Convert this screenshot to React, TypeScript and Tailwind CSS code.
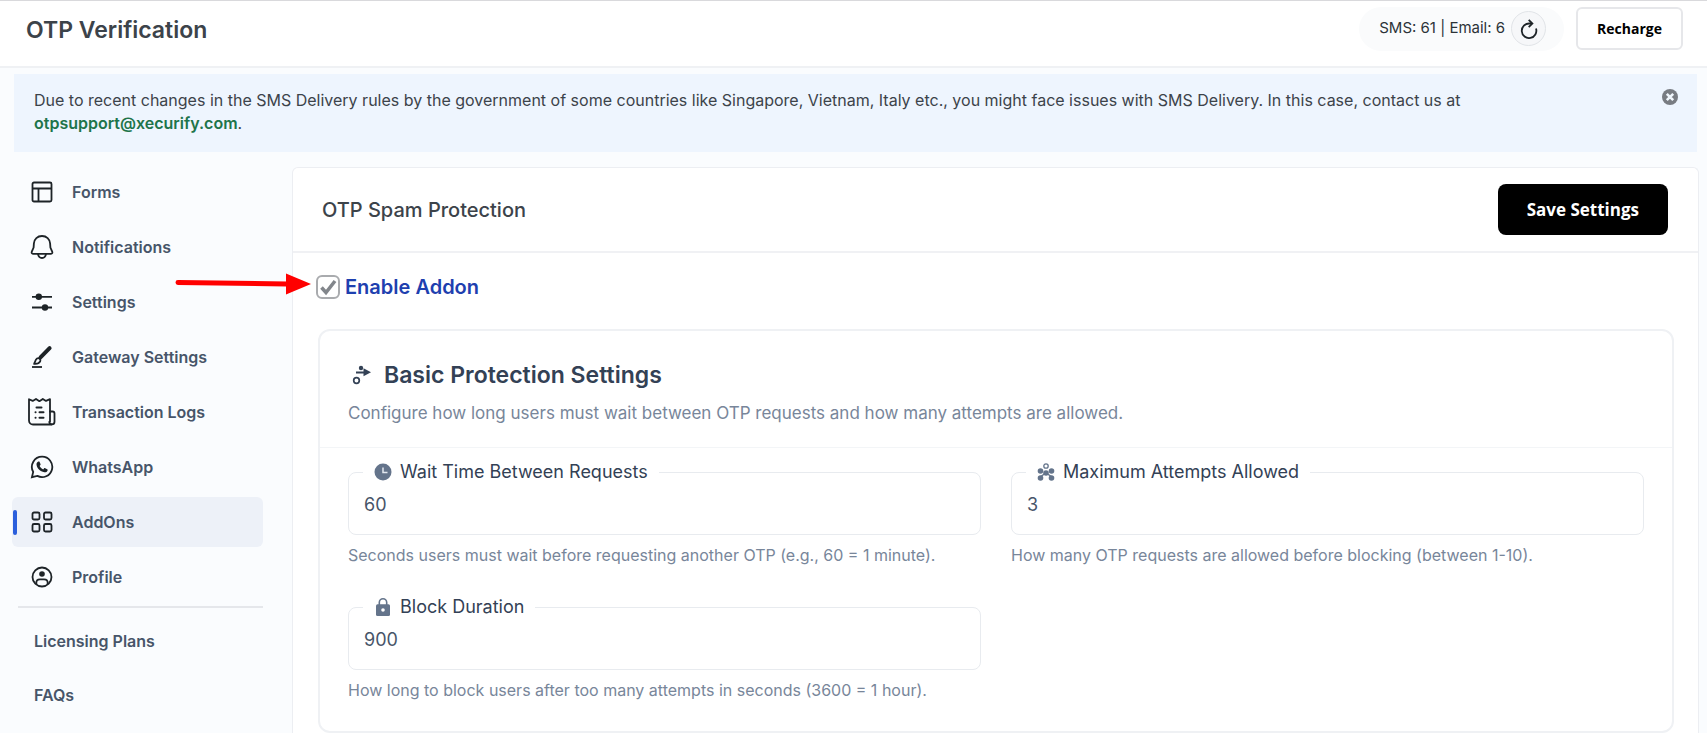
import { useState } from 'react'
import type { ReactNode } from 'react'
import { clsx } from 'clsx'

type IconProps = {
  className?: string
}

type NavItem = {
  label: string
  icon: ReactNode
}

type SettingFieldProps = {
  id: string
  label: string
  icon: ReactNode
  defaultValue: string
  help: string
}

function StrokeIcon({ children }: { children: ReactNode }) {
  return (
    <svg
      viewBox="0 0 24 24"
      className="size-6"
      fill="none"
      stroke="currentColor"
      strokeWidth="1.8"
      aria-hidden="true"
    >
      {children}
    </svg>
  )
}

const navItems: NavItem[] = [
  {
    label: 'Forms',
    icon: (
      <StrokeIcon>
        <rect x="2.5" y="2.5" width="19" height="19" rx="1.5" />
        <path d="M2.5 8.5h19M8.5 8.5v13" />
      </StrokeIcon>
    ),
  },
  {
    label: 'Notifications',
    icon: (
      <StrokeIcon>
        <path d="M12 1c4.600 0 7.800 3.200 8.100 7.400l.3 4.200 1.800 4c.5 1.200 0 2.200-1.200 2.200H3c-1.200 0-1.700-1-1.200-2.200l1.800-4 .3-4.200C4.200 4.200 7.400 1 12 1Z" />
        <path d="M8 19c.3 2.400 1.800 4 4 4s3.700-1.600 4-4" />
      </StrokeIcon>
    ),
  },
  {
    label: 'Settings',
    icon: (
      <StrokeIcon>
        <path d="M2 6.800h20M2 17.500h20" />
        <circle cx="8.800" cy="6.800" r="2.300" fill="currentColor" />
        <circle cx="15" cy="17.500" r="2.300" fill="currentColor" />
      </StrokeIcon>
    ),
  },
  {
    label: 'Gateway Settings',
    icon: (
      <StrokeIcon>
        <path d="M2 22h10" />
        <path d="M3.500 18.800c2-.4 1-3.800 3.500-5.300 2-1.100 4.200.9 3.200 2.900-1.100 2.200-3.700 2.800-6.700 2.400Z" />
        <path d="M10.500 12.300 19.600 3.200" strokeWidth="4" strokeLinecap="round" />
      </StrokeIcon>
    ),
  },
  {
    label: 'Transaction Logs',
    icon: (
      <svg
        viewBox="0 0 28 28"
        className="size-7"
        fill="none"
        stroke="currentColor"
        strokeWidth="1.800"
        strokeLinecap="round"
        strokeLinejoin="round"
        aria-hidden="true"
      >
        <path d="M23.500 26.500H5a4 4 0 0 1-4-4V1.200l3.700 1.700L8 .9l3.400 2.300L14.800.9l3.200 2L22 1.200v22.300" />
        <path d="M22 13.500h2.500a2 2 0 0 1 2 2v8.300a2.600 2.600 0 0 1-5.200 0" />
        <path
          d="M8.500 9.500h5M11.500 14.300h4M11.500 19.800h4M7.500 14.300h.1M7.500 19.800h.1"
          strokeWidth="2"
        />
      </svg>
    ),
  },
  {
    label: 'WhatsApp',
    icon: (
      <StrokeIcon>
        <path d="M12.200 1.700a10.200 10.200 0 1 1-4.900 19.200L1.900 22.200l1.300-5.300A10.200 10.200 0 0 1 12.200 1.700Z" />
        <path
          d="M8.400 6.600c.5-.2 1-.1 1.200.4l.9 2c.2.500.1.900-.3 1.300l-.6.700c.8 1.500 2 2.700 3.600 3.400l.8-.9c.3-.4.8-.5 1.200-.3l2 1c.5.300.6.700.4 1.200-.5 1.400-1.800 2.100-3.300 1.900-4.200-.7-7.400-3.900-7.800-7.700-.1-1.300.7-2.500 1.900-3Z"
          fill="currentColor"
          stroke="none"
        />
      </StrokeIcon>
    ),
  },
  {
    label: 'AddOns',
    icon: (
      <StrokeIcon>
        <rect x="2.500" y="2.500" width="7" height="7" rx="1.500" />
        <rect x="14" y="2.500" width="7.500" height="7" rx="1.500" />
        <rect x="2.500" y="14" width="7" height="7.500" rx="1.500" />
        <rect x="14" y="14" width="7.500" height="7.500" rx="1.500" />
      </StrokeIcon>
    ),
  },
  {
    label: 'Profile',
    icon: (
      <StrokeIcon>
        <circle cx="12" cy="12" r="9.500" />
        <circle cx="12" cy="9" r="2.800" fill="currentColor" stroke="none" />
        <path d="M6.500 19c-.8-3.200 1-4.700 3.500-4.700h4c2.500 0 4.300 1.500 3.500 4.700" />
      </StrokeIcon>
    ),
  },
]

function RefreshIcon({ className }: IconProps) {
  return (
    <svg
      viewBox="0 0 20 20"
      className={className}
      fill="none"
      stroke="currentColor"
      strokeWidth="1.800"
      aria-hidden="true"
    >
      <path d="M17 9.500a7.300 7.300 0 1 1-6.500-5H13" />
      <path d="m9.700.8 3.700 3.700-3.700 3.700" />
    </svg>
  )
}

function CloseIcon({ className }: IconProps) {
  return (
    <svg viewBox="0 0 16 16" className={className} aria-hidden="true">
      <circle cx="8" cy="8" r="8" fill="#787c82" />
      <path d="m4.800 4.800 6.400 6.400M11.200 4.800l-6.400 6.400" stroke="#f0f6fc" strokeWidth="2.600" />
    </svg>
  )
}

function RouteIcon({ className }: IconProps) {
  return (
    <svg viewBox="0 0 20 20" className={className} fill="currentColor" aria-hidden="true">
      <circle cx="4.500" cy="15.500" r="2.800" fill="none" stroke="currentColor" strokeWidth="1.700" />
      <circle cx="9" cy="3" r="2.200" />
      <path d="M4 6.500h7.500V3.300l7.500 4-7.500 4V8.500H4Z" />
    </svg>
  )
}

function ClockIcon() {
  return (
    <svg viewBox="0 0 18 18" className="size-[18px]" aria-hidden="true">
      <circle cx="9" cy="9" r="8.500" fill="#64748b" />
      <path d="M9 4.500V9.500h4.500" fill="none" stroke="#e2e8f0" strokeWidth="1.500" />
    </svg>
  )
}

function AttemptsIcon() {
  return (
    <svg viewBox="0 0 18 18" className="size-[18px]" fill="#64748b" aria-hidden="true">
      <circle cx="9" cy="3" r="2.200" fill="none" stroke="#64748b" strokeWidth="1.300" />
      <circle cx="3.500" cy="8" r="2.800" />
      <circle cx="14.500" cy="8" r="2.800" />
      <circle cx="9" cy="10" r="2.800" />
      <circle cx="3.500" cy="15" r="2.800" />
      <circle cx="14.500" cy="15" r="2.800" />
      <path d="m3 14 6-4 6 4" fill="none" stroke="#64748b" strokeWidth="1.500" />
    </svg>
  )
}

function LockIcon() {
  return (
    <svg viewBox="0 0 18 18" className="size-[18px]" aria-hidden="true">
      <path d="M5.300 7V4.500a3.700 3.700 0 0 1 7.400 0V7" fill="none" stroke="#64748b" strokeWidth="1.600" />
      <rect x="2" y="6.300" width="14" height="11.700" rx="1.500" fill="#64748b" />
      <circle cx="9" cy="12" r="1.800" fill="#fff" />
    </svg>
  )
}

function SettingField({ id, label, icon, defaultValue, help }: SettingFieldProps) {
  return (
    <div>
      <fieldset className="rounded-lg border border-[#e8ebef] pb-2.5">
        <legend className="ml-3.5 px-[11px]">
          <label htmlFor={id} className="flex items-center gap-2 text-lg/6 text-[#334155]">
            {icon}
            {label}
          </label>
        </legend>
        <input
          id={id}
          defaultValue={defaultValue}
          className="block h-10 w-full bg-transparent px-[15px] text-lg text-[#475569] outline-none"
        />
      </fieldset>
      <p className="mt-1.5 text-base/7 text-[#78869a]">{help}</p>
    </div>
  )
}

function Header() {
  return (
    <header className="flex h-[68px] items-center justify-between border-t border-b-2 border-t-[#d9d9dc] border-b-[#eff1f4] bg-white pr-6 pl-[26px]">
      <h1 className="mb-1.5 text-[23px] font-semibold text-[#3c434a]">OTP Verification</h1>
      <div className="mb-2.5 flex items-center gap-3">
        <div className="flex h-11 items-center gap-1.5 rounded-full bg-[#fafbfc] pr-[18px] pl-5">
          <span className="text-[15px] text-[#2c3338]">SMS: 61 | Email: 6</span>
          <button
            type="button"
            aria-label="Refresh balance"
            className="flex size-[35px] items-center justify-center rounded-full border border-[#e1e4e8] bg-[#f6f7f9] text-[#1d2327]"
          >
            <RefreshIcon className="size-5" />
          </button>
        </div>
        <button
          type="button"
          className="h-[43px] rounded-md border-2 border-[#e6e7ea] bg-white px-[19px] font-['Open_Sans',sans-serif] text-sm font-bold text-black"
        >
          Recharge
        </button>
      </div>
    </header>
  )
}

function Notice() {
  const [open, setOpen] = useState(true)

  if (!open) {
    return null
  }

  return (
    <div className="mt-1.5 mr-2.5 ml-3.5 flex h-[78px] items-start justify-between bg-[#eef5fe] pt-[15px] pr-[19px] pl-5">
      <p className="text-base/[23px] text-[#3c434a]">
        Due to recent changes in the SMS Delivery rules by the government of some countries like
        Singapore, Vietnam, Italy etc., you might face issues with SMS Delivery. In this case,
        contact us at
        <br />
        <a href="mailto:otpsupport@xecurify.com" className="font-semibold text-[#20744a]">
          otpsupport@xecurify.com
        </a>
        .
      </p>
      <button type="button" aria-label="Dismiss" onClick={() => setOpen(false)}>
        <CloseIcon className="size-4" />
      </button>
    </div>
  )
}

function Sidebar() {
  return (
    <nav className="w-[292px] shrink-0 pl-3 text-base font-semibold text-[#475569]">
      <ul className="flex w-[251px] flex-col gap-[5px]">
        {navItems.map((item) => (
          <li key={item.label}>
            <a
              href="#"
              className={clsx(
                'relative flex h-[50px] items-center rounded-md',
                item.label === 'AddOns' && 'bg-[#edf1f8]',
              )}
            >
              {item.label === 'AddOns' && (
                <span className="absolute left-px h-[25px] w-1 rounded-xs bg-[#2b5fdc]" />
              )}
              <span className="flex w-[60px] items-center justify-center text-[#1d2327]">
                {item.icon}
              </span>
              {item.label}
            </a>
          </li>
        ))}
      </ul>
      <hr className="mt-1 ml-1.5 w-[245px] border-t-2 border-[#e5e7eb]" />
      <a href="#" className="mt-2 flex h-[50px] items-center pl-[22px]">
        Licensing Plans
      </a>
      <a href="#" className="mt-1 flex h-[50px] items-center pl-[22px]">
        FAQs
      </a>
    </nav>
  )
}

function SpamProtection() {
  const [enabled, setEnabled] = useState(true)

  return (
    <main className="mr-2 min-w-0 grow rounded-t-md border border-b-0 border-[#eceef2] bg-white">
      <div className="flex h-[85px] items-center justify-between border-b-2 border-[#f0f1f4] pr-[30px] pl-[29px]">
        <h2 className="text-xl font-medium text-[#3c434a]">OTP Spam Protection</h2>
        <button
          type="button"
          className="h-[51px] rounded-lg bg-black px-[29px] font-['Open_Sans',sans-serif] text-[17px] font-bold text-white"
        >
          Save Settings
        </button>
      </div>

      <div className="pt-5 pr-6 pl-[23px]">
        <div className="relative flex h-7 items-center">
          <svg
            viewBox="0 0 136 24"
            className="pointer-events-none absolute top-0 -left-[141px] h-6 w-[136px]"
            aria-hidden="true"
          >
            <path d="M3 9.500 112 11" stroke="#f00" strokeWidth="5" strokeLinecap="round" />
            <path d="M111 .5 136 11l-25 10.500Z" fill="#f00" />
          </svg>
          <label className="flex items-center gap-[5px] text-xl font-semibold text-[#1e40af]">
            <span className="relative flex size-6">
              <input
                type="checkbox"
                checked={enabled}
                onChange={(event) => setEnabled(event.target.checked)}
                className="size-6 appearance-none rounded-md border-2 border-[#a9abae] bg-white"
              />
              {enabled && (
                <svg
                  viewBox="0 0 24 24"
                  className="pointer-events-none absolute inset-0"
                  aria-hidden="true"
                >
                  <path d="m5.500 12.500 4.500 5L19 6" fill="none" stroke="#82868b" strokeWidth="3.500" />
                </svg>
              )}
            </span>
            Enable Addon
          </label>
        </div>

        <section className="mt-7 ml-0.5 rounded-xl border-2 border-[#eff1f4] pb-[27px]">
          <div className="border-b border-[#f3f5f7] px-7 pt-7 pb-5">
            <h3 className="flex h-8 items-center gap-3 pl-1 text-[23px] font-semibold text-[#334155]">
              <RouteIcon className="size-5" />
              Basic Protection Settings
            </h3>
            <p className="mt-2 text-[17px]/7 text-[#78869a]">
              Configure how long users must wait between OTP requests and how many attempts are
              allowed.
            </p>
          </div>
          <div className="grid grid-cols-2 gap-x-[30px] gap-y-[26px] px-7 pt-3">
            <SettingField
              id="wait-time"
              label="Wait Time Between Requests"
              icon={<ClockIcon />}
              defaultValue="60"
              help="Seconds users must wait before requesting another OTP (e.g., 60 = 1 minute)."
            />
            <SettingField
              id="max-attempts"
              label="Maximum Attempts Allowed"
              icon={<AttemptsIcon />}
              defaultValue="3"
              help="How many OTP requests are allowed before blocking (between 1-10)."
            />
            <SettingField
              id="block-duration"
              label="Block Duration"
              icon={<LockIcon />}
              defaultValue="900"
              help="How long to block users after too many attempts in seconds (3600 = 1 hour)."
            />
          </div>
        </section>
      </div>
    </main>
  )
}

export default function App() {
  return (
    <div className="flex min-h-screen flex-col bg-[#fafcfe] font-['Inter',sans-serif]">
      <Header />
      <Notice />
      <div className="mt-[15px] flex grow">
        <Sidebar />
        <SpamProtection />
      </div>
    </div>
  )
}
